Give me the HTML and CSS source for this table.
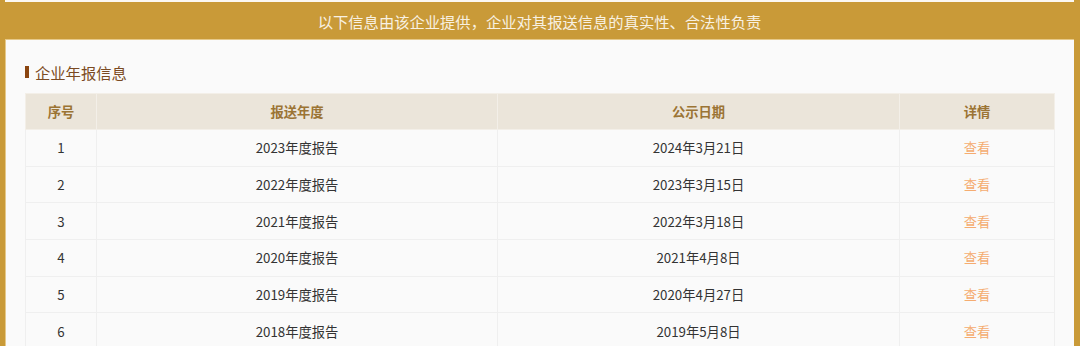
FILE: index.html
```html
<!DOCTYPE html>
<html lang="zh-CN">
<head>
<meta charset="utf-8">
<title>企业年报信息</title>
<link rel="stylesheet" href="styles.css">
</head>
<body>
<div class="frame">
  <div class="top-strip"></div>
  <div class="banner">以下信息由该企业提供，企业对其报送信息的真实性、合法性负责</div>
  <div class="content">
    <h2 class="section-title"><span class="bar"></span>企业年报信息</h2>
    <table class="report-table">
      <colgroup>
        <col class="c-no">
        <col class="c-year">
        <col class="c-date">
        <col class="c-detail">
      </colgroup>
      <thead>
        <tr><th>序号</th><th>报送年度</th><th>公示日期</th><th>详情</th></tr>
      </thead>
      <tbody>
        <tr><td>1</td><td>2023年度报告</td><td>2024年3月21日</td><td><a class="view">查看</a></td></tr>
        <tr><td>2</td><td>2022年度报告</td><td>2023年3月15日</td><td><a class="view">查看</a></td></tr>
        <tr><td>3</td><td>2021年度报告</td><td>2022年3月18日</td><td><a class="view">查看</a></td></tr>
        <tr><td>4</td><td>2020年度报告</td><td>2021年4月8日</td><td><a class="view">查看</a></td></tr>
        <tr><td>5</td><td>2019年度报告</td><td>2020年4月27日</td><td><a class="view">查看</a></td></tr>
        <tr><td>6</td><td>2018年度报告</td><td>2019年5月8日</td><td><a class="view">查看</a></td></tr>
      </tbody>
    </table>
  </div>
</div>
</body>
</html>
```
FILE: styles.css
```css
* { box-sizing: border-box; }
html, body {
  margin: 0;
  padding: 0;
  background: #fafafa;
  font-family: "Noto Sans CJK SC", "Noto Sans", sans-serif;
  overflow: hidden;
}
.frame {
  width: 1080px;
  height: 346px;
  border-left: 5px solid #c99a38;
  border-right: 6px solid #c99a38;
  background: #fafafa;
}
.top-strip {
  height: 2px;
  background: #fbf8f2;
}
.banner {
  height: 38px;
  background: #c99a38;
  color: #f8f1e2;
  font-size: 15.3px;
  line-height: 38px;
  text-align: center;
  border-bottom: 1px solid #e6c98a;
}
.content {
  padding: 0 19px 0 19px;
  border-left: 1px solid #e6c98a;
}
.section-title {
  margin: 0;
  height: 53px;
  padding-top: 10px;
  display: flex;
  align-items: center;
  font-size: 15.3px;
  font-weight: normal;
  color: #7a4a22;
  line-height: 20px;
  gap: 6px;
}
.section-title .bar {
  width: 4px;
  height: 12px;
  background: #8a4510;
}
.report-table {
  width: 1029px;
  border-collapse: collapse;
  table-layout: fixed;
  font-size: 13.3px;
  color: #333;
}
.c-no { width: 71px; }
.c-year { width: 401px; }
.c-date { width: 402px; }
.c-detail { width: 155px; }
.report-table th,
.report-table td {
  border: 1px solid #efefef;
  text-align: center;
  padding: 0;
}
.report-table th {
  height: 36px;
  background: #ebe5da;
  color: #9b7434;
  font-weight: bold;
  border-color: #f3efe8;
}
.report-table td {
  height: 36.67px;
  background: #fafafa;
}
.view {
  color: #f5ac70;
  cursor: pointer;
}
```
